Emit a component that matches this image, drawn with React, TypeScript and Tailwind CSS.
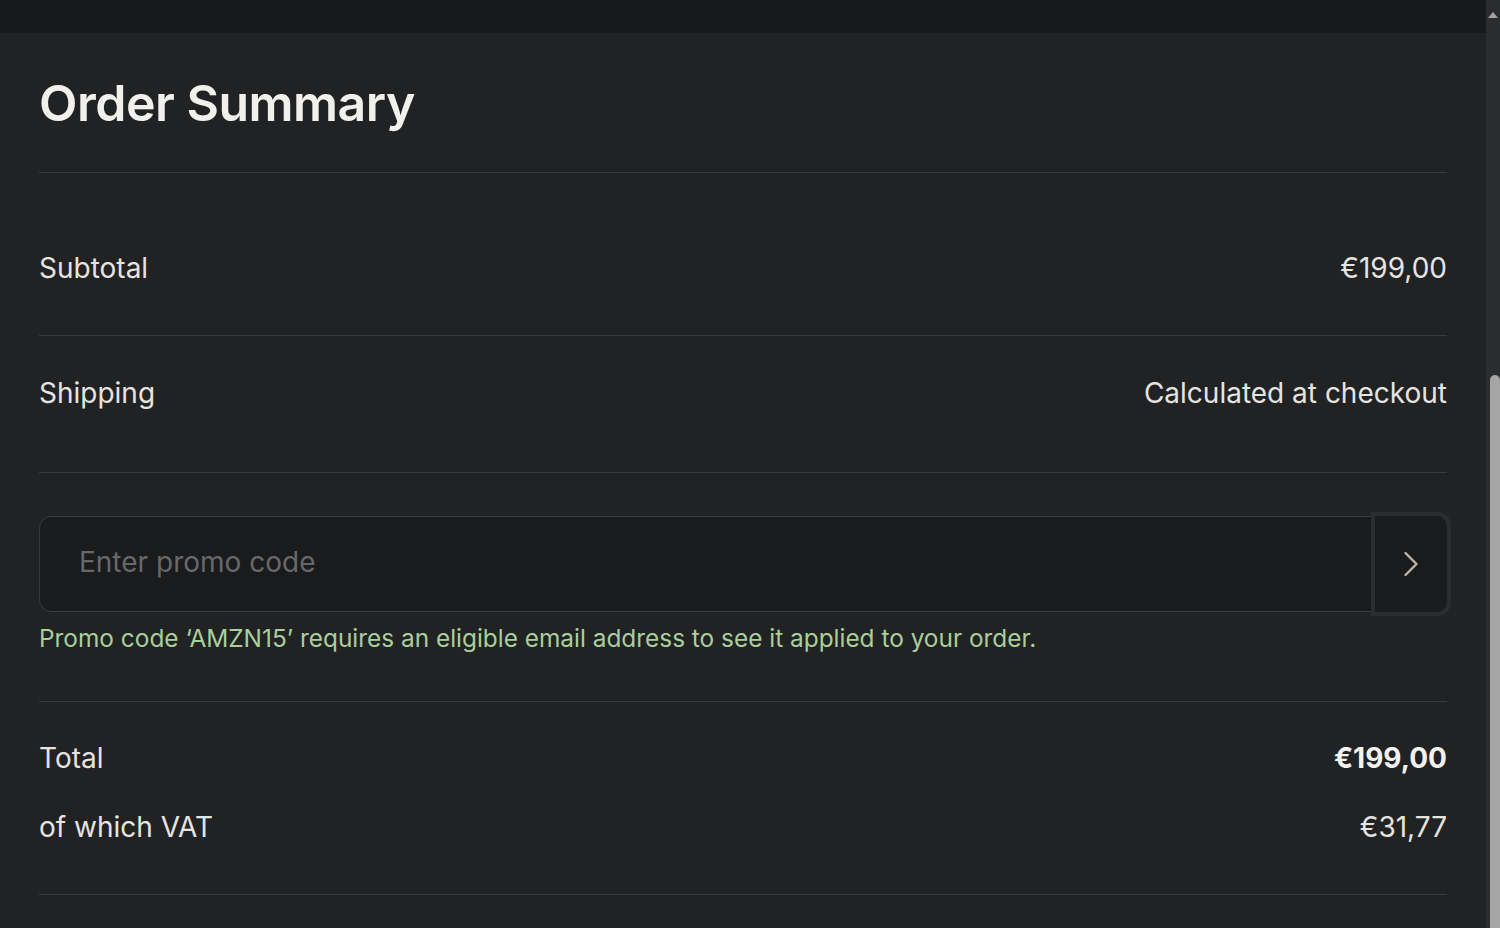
import { ChevronRight } from "lucide-react";

const font = { fontFamily: "Inter, 'Noto Sans', sans-serif" };

function Divider() {
  return <div className="h-px w-full bg-[#3a3b3d]" />;
}

function Row({ label, value, bold }: { label: string; value: string; bold?: boolean }) {
  return (
    <div className="flex items-center justify-between text-[28px] leading-[34px] text-[#e6e4e0]">
      <span>{label}</span>
      <span className={bold ? "font-bold text-[#f4f2ef]" : ""}>{value}</span>
    </div>
  );
}

export default function App() {
  return (
    <div className="flex h-[928px] w-full overflow-hidden bg-[#212224]" style={font}>
      <div className="flex min-w-0 flex-1 flex-col">
        <div className="h-[33px] w-full bg-[#18191b]" />
        <main className="px-[39px]">
          <div className="flex h-[139px] items-center">
            <h1 className="text-[50px] font-semibold leading-[60px] tracking-[-0.01em] text-[#f2f0ed]">
              Order Summary
            </h1>
          </div>
          <Divider />
          <div className="pb-[50px] pt-[78px]">
            <Row label="Subtotal" value="€199,00" />
          </div>
          <Divider />
          <div className="pb-[62px] pt-[40px]">
            <Row label="Shipping" value="Calculated at checkout" />
          </div>
          <Divider />
          <div className="pb-[47px] pt-[43px]">
            <div className="flex h-[96px] items-stretch rounded-[12px] border border-[#3a3b3d] bg-[#1a1b1d]">
              <input
                placeholder="Enter promo code"
                className="min-w-0 flex-1 bg-transparent pb-[4px] pl-[39px] text-[28px] text-[#e6e4e0] outline-none placeholder:text-[#68686a]"
              />
              <button className="-my-[5px] -mr-[5px] flex w-[80px] items-center justify-center rounded-r-[14px] border-[4px] border-[#2c2d2f] bg-[#1a1b1d] text-[#bfb6a6]">
                <ChevronRight size={44} strokeWidth={1.3} />
              </button>
            </div>
            <p className="mt-[10px] text-[24.4px] leading-[32px] text-[#a9cf9c]">
              Promo code ‘AMZN15’ requires an eligible email address to see it applied to your order.
            </p>
          </div>
          <Divider />
          <div className="flex flex-col gap-[35px] pb-[50px] pt-[39px]">
            <Row label="Total" value="€199,00" bold />
            <Row label="of which VAT" value="€31,77" />
          </div>
          <Divider />
        </main>
      </div>
      <div className="flex w-[14px] flex-col bg-[#2b2c2e]">
        <div className="flex h-[33px] items-start justify-center pt-[12px]">
          <div className="h-0 w-0 border-x-[5px] border-b-[6px] border-x-transparent border-b-[#a3a3a3]" />
        </div>
        <div className="h-[342px]" />
        <div className="ml-[4px] flex-1 rounded-t-[5px] bg-[#a5a5a5]" />
      </div>
    </div>
  );
}
